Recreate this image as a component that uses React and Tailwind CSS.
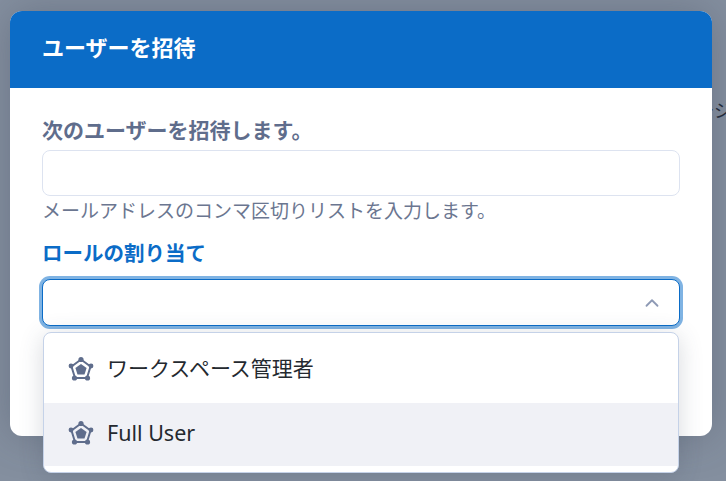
import { ChevronUp } from 'lucide-react';

const font = { fontFamily: '"Noto Sans", "Noto Sans CJK JP", sans-serif' };

function RoleIcon() {
  return (
    <svg viewBox="0 0 26 26" className="w-[26px] h-[26px] shrink-0" fill="none">
      <path d="M13 3.5 L22.5 10.5 L19 22 H7 L3.5 10.5 Z" stroke="#5f6d8c" strokeWidth="2" strokeLinejoin="round" />
      <path d="M13 8 L18.6 12 L16.5 18.4 H9.5 L7.4 12 Z" fill="#5f6d8c" />
      <circle cx="13" cy="3.5" r="2.6" fill="#5f6d8c" />
      <circle cx="23" cy="10" r="2.4" fill="#5f6d8c" />
      <circle cx="19.5" cy="22" r="2.6" fill="#5f6d8c" />
      <circle cx="6.5" cy="22" r="2.6" fill="#5f6d8c" />
      <circle cx="3" cy="10" r="2.4" fill="#5f6d8c" />
    </svg>
  );
}

export default function App() {
  return (
    <div className="relative h-[481px] w-[726px] overflow-hidden bg-[#848f9f]" style={font}>
      {/* page text behind the overlay */}
      <span className="absolute right-[-6px] top-[97px] text-[18px] text-[#1f2937]">ージ</span>

      {/* Modal */}
      <div className="absolute left-[10px] top-[11px] w-[702px] h-[425px] bg-white rounded-xl overflow-hidden shadow-[0_0_40px_rgba(60,70,90,0.35)]">
        <div className="h-[77px] bg-[#0b6cc7] flex items-center px-8 pb-[4px]">
          <h2 className="text-[22px] font-bold text-white">ユーザーを招待</h2>
        </div>
        <div className="px-8 pt-[27px]">
          <label className="block text-[21px] leading-[30px] font-bold text-[#5f6d8c] mb-[5px]">次のユーザーを招待します。</label>
          <div className="h-[46px] w-[638px] rounded-lg border border-[#dde3f0] bg-white" />
          <p className="text-[19px] leading-[30px] text-[#6b7690]">メールアドレスのコンマ区切りリストを入力します。</p>
          <label className="block mt-[12px] text-[20.5px] leading-[30px] font-bold text-[#0b6cc7] mb-[11px]">ロールの割り当て</label>
          <div className="h-[47px] w-[638px] rounded-lg border border-[#0b6cc7] ring-[3px] ring-[#7fb3e3] bg-white flex items-center justify-end pr-[16px]">
            <ChevronUp className="w-[22px] h-[22px] text-[#8e9ab5]" strokeWidth={2} />
          </div>
        </div>
      </div>

      {/* Open dropdown */}
      <div className="absolute left-[43px] top-[332px] w-[636px] h-[141px] bg-white rounded-lg border border-[#c5d2e8] overflow-hidden shadow-[0_4px_24px_rgba(60,70,90,0.2)]">
        <div className="h-[70px] flex items-center gap-[13px] pl-[24px] pt-[2px] text-[21px] text-[#24292f]">
          <RoleIcon />
          <span>ワークスペース管理者</span>
        </div>
        <div className="h-[63px] flex items-center gap-[13px] pl-[24px] pb-[3px] text-[21.5px] text-[#24292f] bg-[#f0f1f6]">
          <RoleIcon />
          <span>Full User</span>
        </div>
      </div>
    </div>
  );
}
